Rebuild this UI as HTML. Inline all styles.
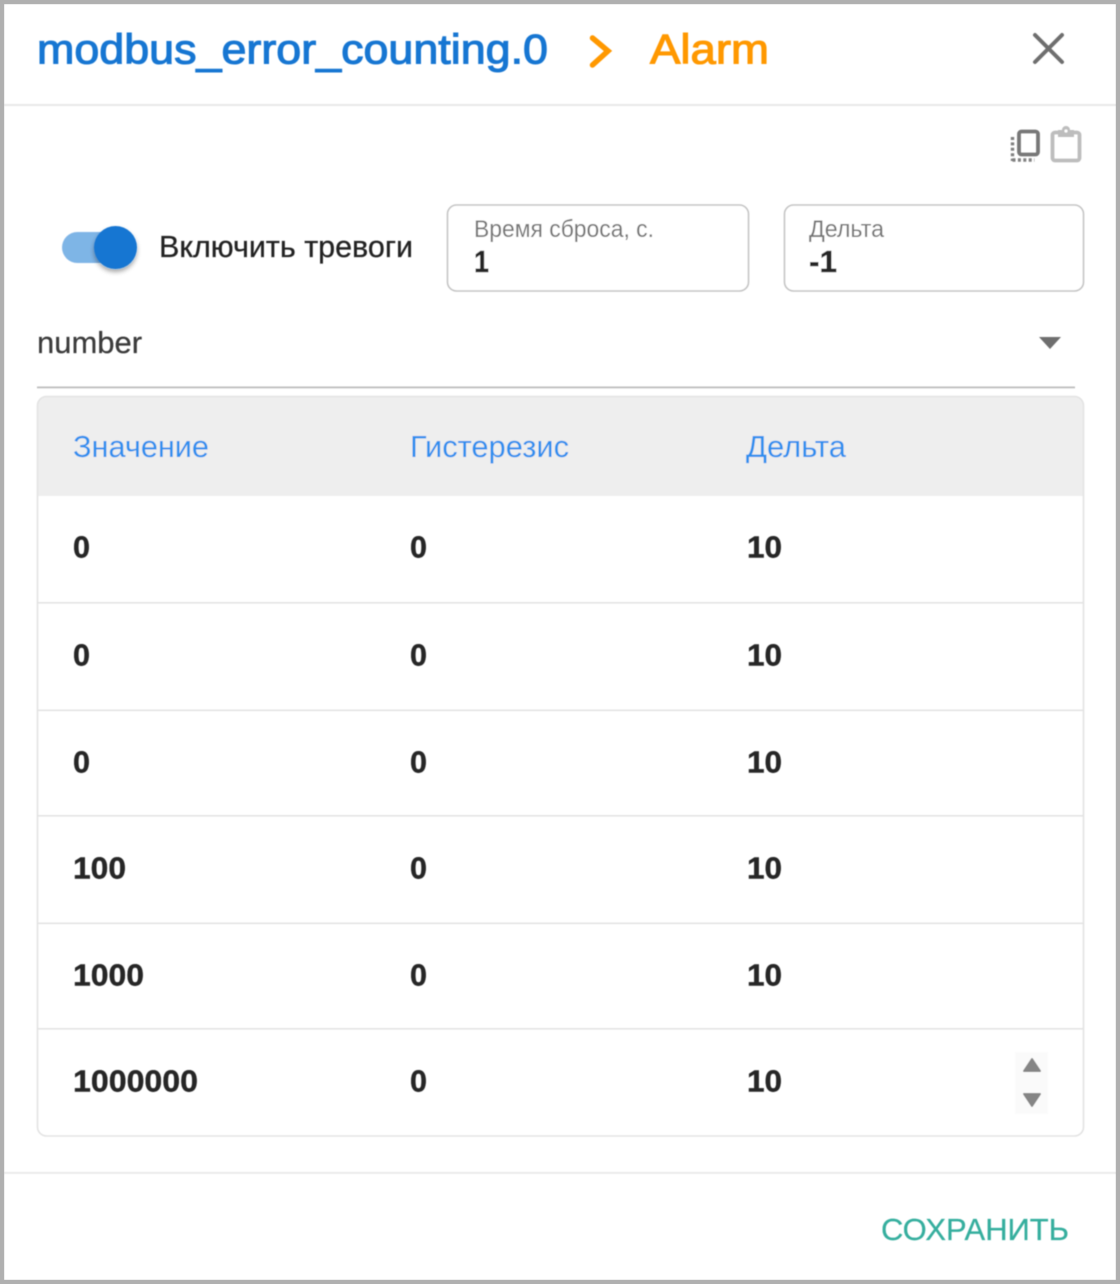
<!DOCTYPE html>
<html lang="ru">
<head>
<meta charset="utf-8">
<title>Alarm</title>
<style>
html,body{margin:0;padding:0;background:#fff;width:1120px;height:1284px;overflow:hidden}
svg{display:block}
text{font-family:"Liberation Sans",sans-serif}
.h{fill:#1976d2;stroke:#1976d2;stroke-width:1.100px}
.o{fill:#ff9800;stroke:#ff9800;stroke-width:1.100px}
.lab{fill:#757575;font-size:24px}
.val{fill:#262626;stroke:#262626;stroke-width:.4px;font-weight:bold;font-size:31px}
.th{fill:#2f8fee;font-size:31px}
.reg{stroke-width:.25px}
</style>
</head>
<body>
<svg width="1120" height="1284" viewBox="0 0 1120 1284" xmlns="http://www.w3.org/2000/svg">
<defs>
<filter id="b" x="-2%" y="-2%" width="104%" height="104%"><feGaussianBlur stdDeviation="0.55"/></filter>
<filter id="s" x="-50%" y="-50%" width="200%" height="200%"><feDropShadow dx="0" dy="3" stdDeviation="2.5" flood-color="#000" flood-opacity=".35"/></filter>
</defs>
<rect width="1120" height="1284" fill="#fff"/>
<g filter="url(#b)">
<!-- header -->
<text x="37" y="63.500" font-size="42" class="h" textLength="511" lengthAdjust="spacingAndGlyphs">modbus_error_counting.0</text>
<path d="M592.500 38 L608 51 L592.500 65" fill="none" stroke="#ff9800" stroke-width="5.500" stroke-linecap="round" stroke-linejoin="miter"/>
<text x="650" y="63.500" font-size="42" class="o" textLength="119" lengthAdjust="spacingAndGlyphs">Alarm</text>
<path d="M1035 35 L1062 62 M1062 35 L1035 62" stroke="#6e6e6e" stroke-width="4" fill="none" stroke-linecap="round"/>
<rect x="4" y="104" width="1113" height="2" fill="#e8e8e8"/>

<!-- copy icon -->
<rect x="1019" y="131.500" width="19" height="23" rx="2.500" fill="none" stroke="#777" stroke-width="3.800"/>
<path d="M1012.500 137v24M1012.500 160h22" fill="none" stroke="#808080" stroke-width="3.400" stroke-dasharray="3 2.400"/>
<!-- paste icon -->
<path d="M1060 132.500h-5a2.500 2.500 0 0 0-2.500 2.500v23a2.500 2.500 0 0 0 2.500 2.500h22a2.500 2.500 0 0 0 2.500-2.500v-23a2.500 2.500 0 0 0-2.500-2.500h-5" fill="none" stroke="#bdbdbd" stroke-width="3.800"/>
<path d="M1058 130h4a4 4 0 0 1 8 0h4v7h-16z" fill="#bdbdbd"/>
<circle cx="1066" cy="131" r="1.600" fill="#fff"/>

<!-- switch -->
<rect x="62" y="232" width="66" height="31" rx="15.500" fill="#1976d2" opacity=".55"/>
<circle cx="115.500" cy="247.500" r="21.500" fill="#1976d2" filter="url(#s)"/>
<text x="159" y="257" font-size="31" fill="#212121" stroke="#212121" class="reg" textLength="254" lengthAdjust="spacingAndGlyphs">Включить тревоги</text>

<!-- inputs -->
<rect x="447.500" y="205" width="301" height="86" rx="9" fill="#fff" stroke="#c4c4c4" stroke-width="1.600"/>
<text x="474" y="237" class="lab" textLength="180" lengthAdjust="spacingAndGlyphs">Время сброса, с.</text>
<text x="474" y="272" class="val" textLength="15" lengthAdjust="spacingAndGlyphs">1</text>
<rect x="784.500" y="205" width="299" height="86" rx="9" fill="#fff" stroke="#c4c4c4" stroke-width="1.600"/>
<text x="809" y="237" class="lab" textLength="75" lengthAdjust="spacingAndGlyphs">Дельта</text>
<text x="809" y="272" class="val" textLength="28" lengthAdjust="spacingAndGlyphs">-1</text>

<!-- select -->
<text x="37" y="353" font-size="31" fill="#3a3a3a" stroke="#3a3a3a" class="reg" textLength="105" lengthAdjust="spacingAndGlyphs">number</text>
<path d="M1039 337h22l-11 12z" fill="#6e6e6e"/>
<rect x="37" y="386.500" width="1038" height="1.800" fill="#bdbdbd"/>

<!-- table -->
<path d="M37.500 496V405a9 9 0 0 1 9-9h1028a9 9 0 0 1 9 9v91z" fill="#eeeeee"/>
<rect x="37.500" y="396.500" width="1046" height="739.500" rx="9" fill="none" stroke="#e3e3e3" stroke-width="1.600"/>
<text x="73" y="457" class="th" textLength="136" lengthAdjust="spacingAndGlyphs">Значение</text>
<text x="410" y="457" class="th" textLength="159" lengthAdjust="spacingAndGlyphs">Гистерезис</text>
<text x="746" y="457" class="th" textLength="100" lengthAdjust="spacingAndGlyphs">Дельта</text>

<g fill="#e3e3e3">
<rect x="38" y="602" width="1045" height="1.600"/>
<rect x="38" y="709.500" width="1045" height="1.600"/>
<rect x="38" y="815" width="1045" height="1.600"/>
<rect x="38" y="922.500" width="1045" height="1.600"/>
<rect x="38" y="1028" width="1045" height="1.600"/>
</g>

<text x="73" y="557.500" class="val" textLength="17" lengthAdjust="spacingAndGlyphs">0</text>
<text x="410" y="557.500" class="val" textLength="17" lengthAdjust="spacingAndGlyphs">0</text>
<text x="747" y="557.500" class="val" textLength="35" lengthAdjust="spacingAndGlyphs">10</text>

<text x="73" y="665.500" class="val" textLength="17" lengthAdjust="spacingAndGlyphs">0</text>
<text x="410" y="665.500" class="val" textLength="17" lengthAdjust="spacingAndGlyphs">0</text>
<text x="747" y="665.500" class="val" textLength="35" lengthAdjust="spacingAndGlyphs">10</text>

<text x="73" y="772.500" class="val" textLength="17" lengthAdjust="spacingAndGlyphs">0</text>
<text x="410" y="772.500" class="val" textLength="17" lengthAdjust="spacingAndGlyphs">0</text>
<text x="747" y="772.500" class="val" textLength="35" lengthAdjust="spacingAndGlyphs">10</text>

<text x="73" y="878.500" class="val" textLength="53" lengthAdjust="spacingAndGlyphs">100</text>
<text x="410" y="878.500" class="val" textLength="17" lengthAdjust="spacingAndGlyphs">0</text>
<text x="747" y="878.500" class="val" textLength="35" lengthAdjust="spacingAndGlyphs">10</text>

<text x="73" y="985.500" class="val" textLength="71" lengthAdjust="spacingAndGlyphs">1000</text>
<text x="410" y="985.500" class="val" textLength="17" lengthAdjust="spacingAndGlyphs">0</text>
<text x="747" y="985.500" class="val" textLength="35" lengthAdjust="spacingAndGlyphs">10</text>

<text x="73" y="1091.500" class="val" textLength="125" lengthAdjust="spacingAndGlyphs">1000000</text>
<text x="410" y="1091.500" class="val" textLength="17" lengthAdjust="spacingAndGlyphs">0</text>
<text x="747" y="1091.500" class="val" textLength="35" lengthAdjust="spacingAndGlyphs">10</text>

<!-- spinner -->
<rect x="1015" y="1052" width="33" height="62" fill="#fafafa"/>
<path d="M1024 1071 L1032 1059 L1040 1071z" fill="#858585" stroke="#858585" stroke-width="2" stroke-linejoin="round"/>
<path d="M1024 1094 L1040 1094 L1032 1106z" fill="#858585" stroke="#858585" stroke-width="2" stroke-linejoin="round"/>

<!-- footer -->
<rect x="4" y="1172" width="1113" height="1.800" fill="#e8e8e8"/>
<text x="881" y="1240" font-size="31" fill="#36ae9e" stroke="#36ae9e" class="reg" textLength="188" lengthAdjust="spacingAndGlyphs">СОХРАНИТЬ</text>
</g>

<!-- outer frame -->
<rect x="2" y="2" width="1116" height="1280" fill="none" stroke="#b0b0b0" stroke-width="4.400"/>
</svg>
</body>
</html>
